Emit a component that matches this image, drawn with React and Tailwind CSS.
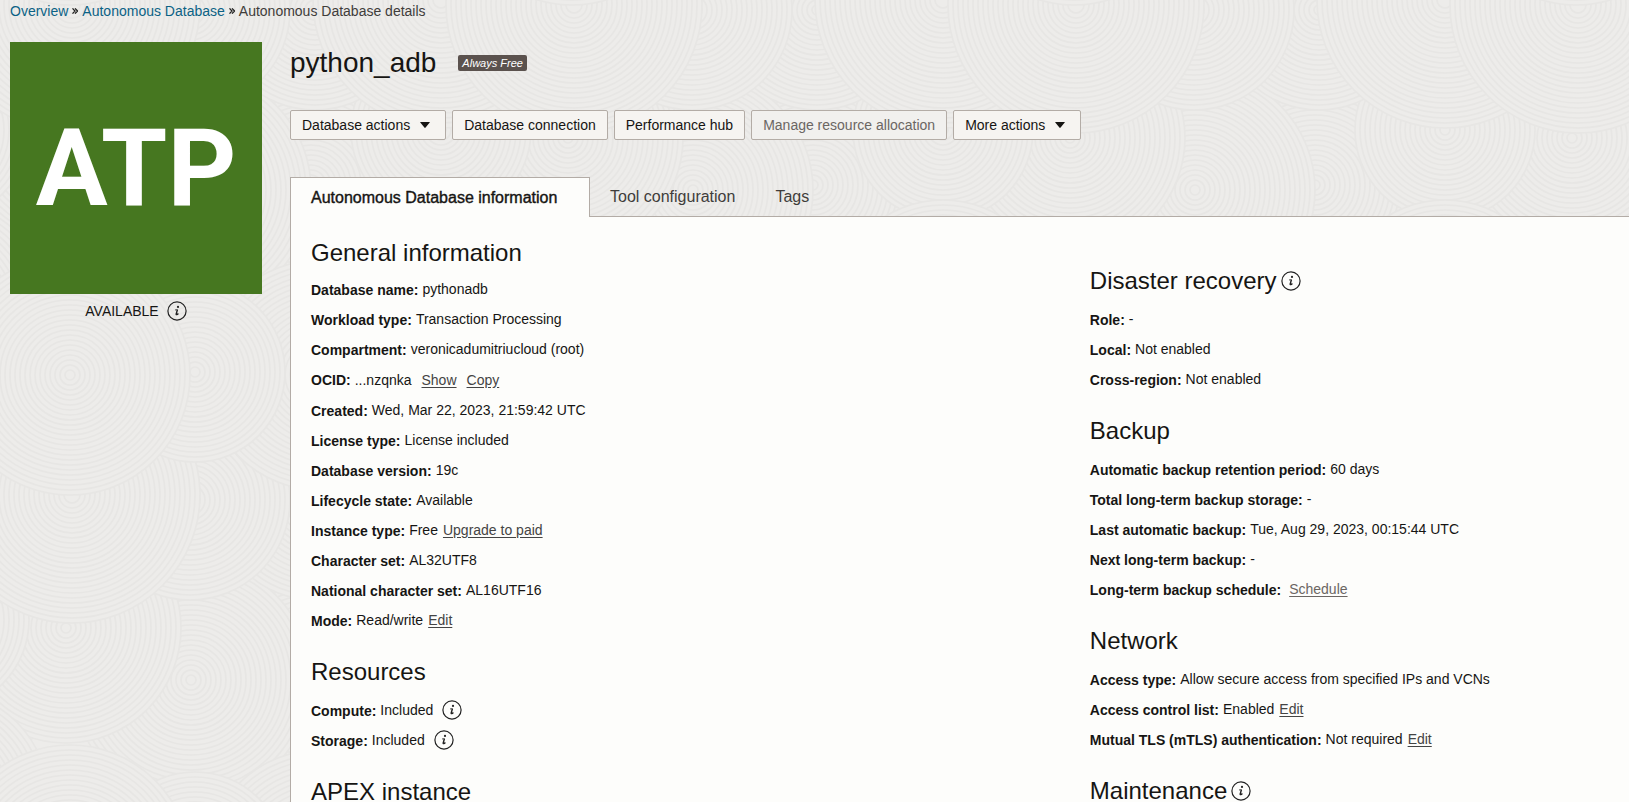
const TILE_W = 502;
const TILE_H = 490;

// x, y, radius of each ridged disc in one tile; later discs cover earlier ones
const DISCS = [
  [250, 260, 120], [441, 190, 110], [320, 490, 120], [311, 185, 125], [191, 190, 120], [66, 138, 115],
  [441, 130, 90], [315, 10, 100], [190, 10, 100], [441, 0, 128], [72, 5, 128],
  [320, 375, 115], [195, 372, 90], [441, 310, 110], [70, 375, 120],
];

const TILE_DISCS = DISCS.flatMap(([x, y, r]) =>
  [-1, 0, 1].flatMap((i) => [-1, 0, 1].map((j) => [x + i * TILE_W, y + j * TILE_H, r]))
).filter(([x, y, r]) => x + r > 0 && x - r < TILE_W && y + r > 0 && y - r < TILE_H);

function Swirls() {
  return (
    <svg className="absolute inset-0 -z-10 size-full" aria-hidden="true">
      <pattern id="swirls" width={TILE_W} height={TILE_H} patternUnits="userSpaceOnUse">
        {TILE_DISCS.map(([x, y, r], i) => (
          <g key={i} transform={`translate(${x} ${y})`} stroke="#e7e6e4" strokeWidth="1.6">
            <circle r={r} fill="#edecea" />
            {Array.from({ length: Math.floor(r / 5) - 1 }, (_, k) => (
              <circle key={k} r={r - 5 * (k + 1)} fill="none" />
            ))}
          </g>
        ))}
      </pattern>
      <rect width="100%" height="100%" fill="url(#swirls)" />
    </svg>
  );
}

function Info({ label }) {
  return (
    <button type="button" aria-label={label} className="shrink-0 text-[#222]">
      <svg viewBox="0 0 20 20" className="size-5" fill="none" stroke="currentColor">
        <circle cx="10" cy="10" r="9.1" strokeWidth="1.2" />
        <circle cx="11" cy="5.9" r="1.1" fill="currentColor" stroke="none" />
        <path d="M10.4 8.7 9.2 13c-.2 1 .8.9 2.2-.5" strokeWidth="1.4" />
        <path d="M8 9c.8-.1 1.4-.3 2.6-.4" strokeWidth=".8" />
      </svg>
    </button>
  );
}

function Sep() {
  return (
    <svg viewBox="0 0 6 6" className="size-1.5" fill="none" stroke="#222" strokeWidth="1.3" aria-hidden="true">
      <path d="M.5.4 3 3 .5 5.6M3 .4 5.5 3 3 5.6" />
    </svg>
  );
}

function Link({ children, className = "text-[#444]" }) {
  return <a href="#" className={`underline underline-offset-2 ${className}`}>{children}</a>;
}

function Row({ label, children }) {
  return (
    <div className="flex h-[30px] items-center gap-1">
      <dt className="pt-0.5 font-bold">{label}:</dt>
      <dd className="flex items-center gap-[5px]">{children}</dd>
    </div>
  );
}

function Section({ title, info, first, children }) {
  return (
    <section>
      <div className={`flex items-center gap-1 ${first ? "pt-5 pb-[5px]" : "pt-[21px] pb-[7px]"}`}>
        <h2 className="text-2xl">{title}</h2>
        {info && <Info label={`About ${title}`} />}
      </div>
      <dl>{children}</dl>
    </section>
  );
}

function Button({ children, menu, disabled }) {
  return (
    <button
      type="button"
      disabled={disabled}
      className="flex h-[30px] items-center gap-2.5 rounded-xs border border-[#b3aca6] bg-[#f6f4f1] px-[11px] disabled:bg-[#f1f0ee] disabled:text-[#6b6663]"
    >
      {children}
      {menu && (
        <svg viewBox="0 0 10 6" className="mr-1 h-1.5 w-2.5" fill="currentColor"><path d="M.6 0h8.8q.8 0 .3.6L5.6 5.6q-.6.6-1.2 0L.3.6Q-.2 0 .6 0z" /></svg>
      )}
    </button>
  );
}

export default function App() {
  return (
    <div className="relative isolate h-screen overflow-x-hidden overflow-y-auto bg-[#edecea] font-['Liberation_Sans',Arial,sans-serif] text-sm text-[#161513] [scrollbar-width:none]">
      <Swirls />
      <nav aria-label="Breadcrumb" className="flex h-[22px] items-center gap-1 px-2.5 text-[#3f3d3b]">
        <a href="#" className="text-[#0b6285]">Overview</a>
        <Sep />
        <a href="#" className="text-[#0b6285]">Autonomous Database</a>
        <Sep />
        <span>Autonomous Database details</span>
      </nav>

      <div className="flex gap-7 pt-5 pl-2.5">
        <aside className="w-[252px] shrink-0">
          <div className="flex aspect-square items-center justify-center bg-[#467720] font-[Roboto,sans-serif] text-[107px] leading-none font-bold text-white">ATP</div>
          <div className="flex items-center justify-center gap-2 pt-[7px]">
            <span>AVAILABLE</span>
            <Info label="About lifecycle state" />
          </div>
        </aside>

        <main className="flex min-w-0 grow flex-col">
          <div className="flex items-center gap-[22px]">
            <h1 className="text-[28px] leading-[42px]">python_adb</h1>
            <span className="rounded-xs bg-[#5b524e] px-1 text-[11px] leading-4 text-white italic">Always Free</span>
          </div>

          <div className="flex gap-1.5 pt-[26px]">
            <Button menu>Database actions</Button>
            <Button>Database connection</Button>
            <Button>Performance hub</Button>
            <Button disabled>Manage resource allocation</Button>
            <Button menu>More actions</Button>
          </div>

          <div role="tablist" className="z-10 -mb-px flex pt-[37px] text-base text-[#3f3d3b]">
            <button role="tab" aria-selected="true" className="h-10 min-w-[300px] border border-b-0 border-[#b3aca6] bg-[#fdfdfb] px-5 text-left text-[#161513] [-webkit-text-stroke:0.4px_#161513]">Autonomous Database information</button>
            <button role="tab" aria-selected="false" className="h-10 px-5">Tool configuration</button>
            <button role="tab" aria-selected="false" className="h-10 px-5">Tags</button>
          </div>

          <div role="tabpanel" className="grid grow grid-cols-[3fr_2fr] border-t border-l border-[#b3aca6] bg-[#fdfdfb] px-5">
            <div>
              <Section title="General information" first>
                <Row label="Database name">pythonadb</Row>
                <Row label="Workload type">Transaction Processing</Row>
                <Row label="Compartment">veronicadumitriucloud (root)</Row>
                <div className="flex h-[31px] items-center gap-1">
                  <dt className="font-bold">OCID:</dt>
                  <dd className="flex gap-2.5">...nzqnka <Link>Show</Link> <Link>Copy</Link></dd>
                </div>
                <Row label="Created">Wed, Mar 22, 2023, 21:59:42 UTC</Row>
                <Row label="License type">License included</Row>
                <Row label="Database version">19c</Row>
                <Row label="Lifecycle state">Available</Row>
                <Row label="Instance type">Free <Link>Upgrade to paid</Link></Row>
                <Row label="Character set">AL32UTF8</Row>
                <Row label="National character set">AL16UTF16</Row>
                <Row label="Mode">Read/write <Link>Edit</Link></Row>
              </Section>
              <Section title="Resources">
                <Row label="Compute"><span className="mr-1">Included</span> <Info label="About compute" /></Row>
                <Row label="Storage"><span className="mr-1">Included</span> <Info label="About storage" /></Row>
              </Section>
              <Section title="APEX instance" />
            </div>
            <div className="pt-[27px]">
              <Section title="Disaster recovery" info>
                <Row label="Role">-</Row>
                <Row label="Local">Not enabled</Row>
                <Row label="Cross-region">Not enabled</Row>
              </Section>
              <Section title="Backup">
                <Row label="Automatic backup retention period">60 days</Row>
                <Row label="Total long-term backup storage">-</Row>
                <Row label="Last automatic backup">Tue, Aug 29, 2023, 00:15:44 UTC</Row>
                <Row label="Next long-term backup">-</Row>
                <Row label="Long-term backup schedule"><Link className="ml-1 text-[#6b6663]">Schedule</Link></Row>
              </Section>
              <Section title="Network">
                <Row label="Access type">Allow secure access from specified IPs and VCNs</Row>
                <Row label="Access control list">Enabled <Link>Edit</Link></Row>
                <Row label="Mutual TLS (mTLS) authentication">Not required <Link>Edit</Link></Row>
              </Section>
              <Section title="Maintenance" info />
            </div>
          </div>
        </main>
      </div>
    </div>
  );
}
